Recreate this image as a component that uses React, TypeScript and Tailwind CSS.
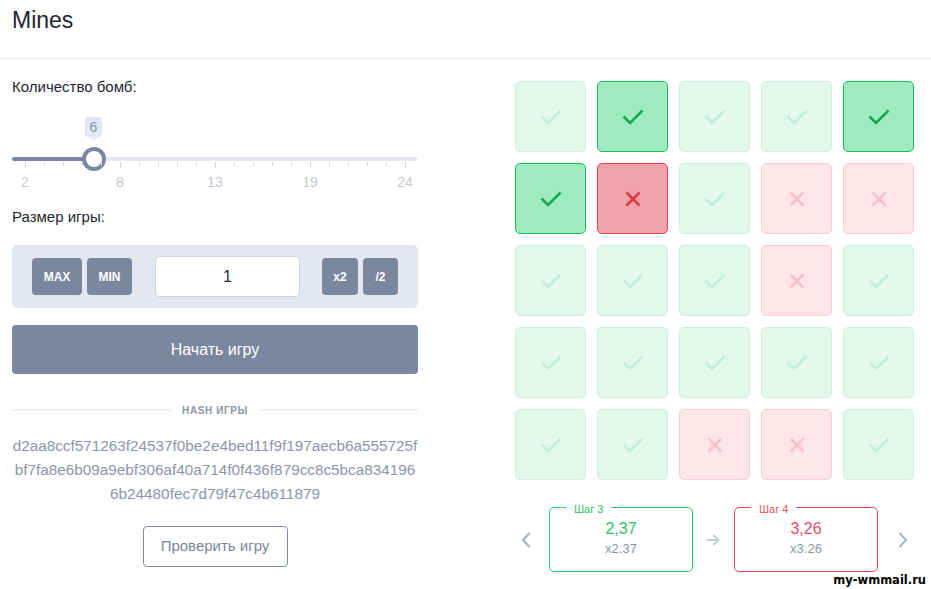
import React from "react";

type Cell = "g" | "G" | "R" | "r";

const board: Cell[][] = [
  ["g", "G", "g", "g", "G"],
  ["G", "R", "g", "r", "r"],
  ["g", "g", "g", "r", "g"],
  ["g", "g", "g", "g", "g"],
  ["g", "g", "r", "r", "g"],
];

const cellBox: Record<Cell, string> = {
  g: "bg-[#e3f8ec] border-[#c9f0da]",
  G: "bg-[#9debbf] border-[#22b85c]",
  R: "bg-[#f0a3aa] border-[#e0404f]",
  r: "bg-[#fce6e9] border-[#f8cdd2]",
};

const iconColor: Record<Cell, string> = {
  g: "#c3edd4",
  G: "#17a650",
  R: "#e0364a",
  r: "#f5c2c8",
};

function Check({ color }: { color: string }) {
  return (
    <svg width="22" height="16" viewBox="0 0 22 16" fill="none">
      <path d="M1.5 7.5 L8 14 L20.5 1.5" stroke={color} strokeWidth="2.6" strokeLinejoin="miter" />
    </svg>
  );
}

function Cross({ color }: { color: string }) {
  return (
    <svg width="16" height="16" viewBox="0 0 16 16" fill="none">
      <path d="M1.5 1.5 L14.5 14.5 M14.5 1.5 L1.5 14.5" stroke={color} strokeWidth="2.6" />
    </svg>
  );
}

function Tile({ type }: { type: Cell }) {
  const isBomb = type === "R" || type === "r";
  return (
    <div className={`w-[71px] h-[71px] rounded-[5px] border flex items-center justify-center ${cellBox[type]}`}>
      {isBomb ? <Cross color={iconColor[type]} /> : <Check color={iconColor[type]} />}
    </div>
  );
}

function StepCard({ step, value, mult, tone }: { step: string; value: string; mult: string; tone: "green" | "red" }) {
  const border = tone === "green" ? "border-[#3cc676]" : "border-[#e84c5c]";
  const text = tone === "green" ? "text-[#2dbf67]" : "text-[#e8505f]";
  return (
    <div className={`relative w-[144px] h-[65px] rounded-[5px] border ${border} flex flex-col items-center pt-[11px]`}>
      <span className={`absolute left-[16px] top-[-5px] bg-white px-[8px] text-[11px] leading-[12px] ${text}`}>{step}</span>
      <span className={`text-[16px] leading-[20px] ${text}`}>{value}</span>
      <span className="mt-[2px] text-[13px] leading-[16px] text-[#8c96a9]">{mult}</span>
    </div>
  );
}

const ticks = Array.from({ length: 21 }, (_, i) => i);
const tickLabels: Record<number, string> = { 0: "2", 5: "8", 10: "13", 15: "19", 20: "24" };

function Slider() {
  return (
    <div className="relative h-[72px] mt-[20px]">
      <div className="absolute left-[73px] top-0 w-[17px] h-[20px] rounded-[3px] bg-[#e3e8f1] text-[14px] leading-[20px] text-center text-[#8a96ab]">
        6
      </div>
      <div className="absolute left-[78px] top-[20px] w-0 h-0 border-x-[4px] border-x-transparent border-t-[4px] border-t-[#e3e8f1]" />
      <div className="absolute left-0 right-0 top-[40px] h-[4px] rounded-full bg-[#e3e8f0]" />
      <div className="absolute left-0 top-[40px] h-[4px] w-[82px] rounded-full bg-[#7a879e]" />
      <div className="absolute left-[70px] top-[30px] w-[24px] h-[24px] rounded-full border-[4px] border-[#7a879e] bg-white" />
      <div className="absolute left-[13px] top-[45px] w-[380px]">
        {ticks.map((i) => (
          <div key={i} className="absolute top-0" style={{ left: i * 19 }}>
            <div className={`w-px bg-[#d3d8e1] ${i % 5 === 0 ? "h-[6px]" : "h-[4px]"}`} />
            {tickLabels[i] && (
              <span className="absolute top-[10px] left-0 -translate-x-1/2 text-[14px] leading-[20px] text-[#c6c9cf]">
                {tickLabels[i]}
              </span>
            )}
          </div>
        ))}
      </div>
    </div>
  );
}

export default function App() {
  return (
    <div className="relative w-[931px] h-[589px] bg-white overflow-hidden font-['Liberation_Sans',Arial,sans-serif]">
      <div className="h-[59px] border-b border-[#e6e7f1] px-[12px] pt-[6px]">
        <h1 className="text-[23px] leading-[28px] text-[#1e2433]">Mines</h1>
      </div>

      <div className="flex px-[12px] gap-[97px]">
        <div className="w-[406px] pt-[18px] flex flex-col">
          <div className="text-[15px] leading-[20px] text-[#1f2533]">Количество бомб:</div>
          <Slider />
          <div className="mt-[18px] text-[15px] leading-[20px] text-[#1f2533]">Размер игры:</div>

          <div className="mt-[18px] h-[63px] rounded-[5px] bg-[#e3e7ef] flex items-center px-[20px]">
            <button className="w-[50px] h-[37px] rounded-[4px] bg-[#7a879e] text-white text-[12px] font-bold">MAX</button>
            <button className="ml-[5px] w-[45px] h-[37px] rounded-[4px] bg-[#7a879e] text-white text-[12px] font-bold">MIN</button>
            <div className="ml-[23px] w-[145px] h-[41px] rounded-[4px] border border-[#c9d3e3] bg-white flex items-center justify-center text-[16px] text-[#1e2a44]">
              1
            </div>
            <button className="ml-[22px] w-[36px] h-[37px] rounded-[4px] bg-[#7a879e] text-white text-[12px] font-bold">x2</button>
            <button className="ml-[5px] w-[35px] h-[37px] rounded-[4px] bg-[#7a879e] text-white text-[12px] font-bold">/2</button>
          </div>

          <button className="mt-[17px] h-[49px] rounded-[4px] bg-[#7a879e] text-white text-[16px]">Начать игру</button>

          <div className="mt-[29px] h-[14px] flex items-center gap-[11px]">
            <div className="flex-1 h-[2px] bg-[#eff0f6]" />
            <span className="text-[10px] font-bold tracking-[0.6px] text-[#8c96a9]">HASH ИГРЫ</span>
            <div className="flex-1 h-[2px] bg-[#eff0f6]" />
          </div>

          <div className="mt-[17px] text-center text-[15.3px] leading-[24px] text-[#8c96a9]">
            <div>d2aa8ccf571263f24537f0be2e4bed11f9f197aecb6a555725f</div>
            <div>bf7fa8e6b09a9ebf306af40a714f0f436f879cc8c5bca834196</div>
            <div>6b24480fec7d79f47c4b611879</div>
          </div>

          <div className="mt-[20px] flex justify-center">
            <button className="w-[145px] h-[41px] rounded-[4px] border border-[#7f8ba2] text-[15px] text-[#7a879e]">
              Проверить игру
            </button>
          </div>
        </div>

        <div className="w-[399px] pt-[22px]">
          <div className="grid grid-cols-[repeat(5,71px)] gap-[11px]">
            {board.flat().map((c, i) => (
              <Tile key={i} type={c} />
            ))}
          </div>

          <div className="mt-[27px] flex items-center justify-center">
            <svg width="12" height="18" viewBox="0 0 12 18" fill="none">
              <path d="M9.5 2 L3 9 L9.5 16" stroke="#a9b4c6" strokeWidth="2.2" />
            </svg>
            <div className="ml-[17px]">
              <StepCard step="Шаг 3" value="2,37" mult="x2.37" tone="green" />
            </div>
            <svg className="ml-[13px]" width="14" height="12" viewBox="0 0 14 12" fill="none">
              <path d="M0.5 6 H12.5 M7.5 1 L12.5 6 L7.5 11" stroke="#c3cbd8" strokeWidth="1.8" />
            </svg>
            <div className="ml-[14px]">
              <StepCard step="Шаг 4" value="3,26" mult="x3.26" tone="red" />
            </div>
            <svg className="ml-[19px]" width="12" height="18" viewBox="0 0 12 18" fill="none">
              <path d="M2.5 2 L9 9 L2.5 16" stroke="#a9b4c6" strokeWidth="2.2" />
            </svg>
          </div>
        </div>
      </div>

      <div className="absolute right-[5px] bottom-[1px] font-['DejaVu_Sans',sans-serif] font-bold text-[11.5px] leading-[16px] text-black [text-shadow:1px_0_#fff,-1px_0_#fff,0_1px_#fff,0_-1px_#fff,1px_1px_#fff,-1px_-1px_#fff,1px_-1px_#fff,-1px_1px_#fff]">
        my-wmmail.ru
      </div>
    </div>
  );
}
